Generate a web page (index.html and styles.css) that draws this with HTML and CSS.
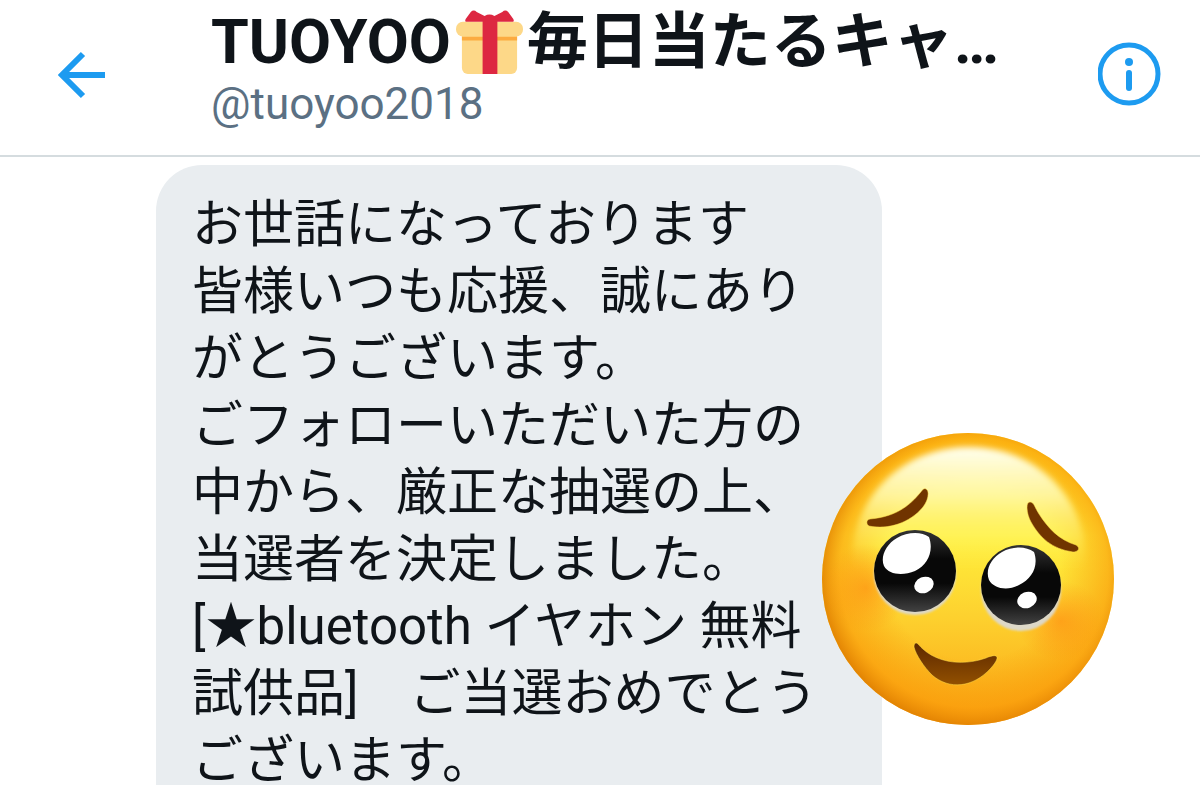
FILE: index.html
```
<!DOCTYPE html>
<html lang="ja">
<head>
<meta charset="utf-8">
<meta name="viewport" content="width=device-width, initial-scale=1">
<title>TUOYOO</title>
<link rel="stylesheet" href="styles.css">
</head>
<body>
<div class="screen">
  <header class="header">
    <button class="icon-button" type="button" aria-label="戻る">
      <svg class="icon-back" viewBox="0 0 48 48" fill="none" stroke="currentColor" stroke-width="6" aria-hidden="true">
        <path d="M47 24H5M25 3 4 24l21 21"/>
      </svg>
    </button>
    <div class="account">
      <h1 class="name"><span>TUOYOO</span><svg class="gift" viewBox="0 0 68 68" role="img" aria-label="プレゼント">
          <path fill="#fdd888" d="M6 25h56v35a6 6 0 0 1-6 6H12a6 6 0 0 1-6-6z"/>
          <path fill="#fcab40" d="M6 28h56v4H6z"/>
          <rect x="0" y="13" width="68" height="15" rx="7" fill="#fdd888"/>
          <path fill="#dd2741" d="M11 13c-2 0-2-1-1-3l5-7c2-2 4-2 6 0l8 4q5-3 10 0l8-4c2-2 4-2 6 0l5 7c1 2 1 3-1 3H42v53H27V13z"/>
        </svg><span>毎日当たるキャ…</span></h1>
      <p class="handle">@tuoyoo2018</p>
    </div>
    <button class="icon-button" type="button" aria-label="情報">
      <svg class="icon-info" viewBox="0 0 64 64" aria-hidden="true">
        <circle cx="31" cy="32" r="29" fill="none" stroke="currentColor" stroke-width="5"/>
        <circle cx="31" cy="20" r="4" fill="currentColor"/>
        <path d="M31 31v15" stroke="currentColor" stroke-width="6" stroke-linecap="round"/>
      </svg>
    </button>
  </header>
  <main class="thread">
    <div class="bubble">
      <p>お世話になっております<br>皆様いつも応援、誠にありがとうございます。</p>
      <p>ごフォローいただいた方の中から、厳正な抽選の上、当選者を決定しました。</p>
      <p>[★bluetooth イヤホン 無料試供品]　ご当選おめでとうございます。</p>
      <svg class="sticker" viewBox="0 0 320 320" role="img" aria-label="うるうる笑顔">
        <defs>
          <linearGradient id="face" x1="0" y1="0" x2="0" y2="1">
            <stop offset="0" stop-color="#ffd31c"/>
            <stop offset=".35" stop-color="#fff03c"/>
            <stop offset=".62" stop-color="#fdd22f"/>
            <stop offset="1" stop-color="#fba414"/>
          </linearGradient>
          <radialGradient id="rim" cx=".52" cy=".48" r=".54">
            <stop offset=".55" stop-color="#f79a08" stop-opacity="0"/>
            <stop offset=".85" stop-color="#fa9a08" stop-opacity=".6"/>
            <stop offset="1" stop-color="#dc7c00"/>
          </radialGradient>
          <linearGradient id="shine" x1="0" y1="0" x2="0" y2="1">
            <stop offset="0" stop-color="#fffff0"/>
            <stop offset=".3" stop-color="#fffbb0" stop-opacity=".85"/>
            <stop offset=".75" stop-color="#fff45a" stop-opacity="0"/>
          </linearGradient>
          <radialGradient id="blush">
            <stop offset="0" stop-color="#ff8a10" stop-opacity=".6"/>
            <stop offset="1" stop-color="#ff9010" stop-opacity="0"/>
          </radialGradient>
          <linearGradient id="eye" x1="0" y1="0" x2="0" y2="1">
            <stop offset="0" stop-color="#333"/>
            <stop offset=".35" stop-color="#080808"/>
            <stop offset=".65" stop-color="#080808"/>
            <stop offset="1" stop-color="#424242"/>
          </linearGradient>
          <linearGradient id="mouth" x1="0" y1="0" x2="0" y2="1">
            <stop offset="0" stop-color="#5c2800"/>
            <stop offset="1" stop-color="#925000"/>
          </linearGradient>
          <filter id="soft"><feGaussianBlur stdDeviation="1"/></filter>
          <filter id="softer"><feGaussianBlur stdDeviation="3"/></filter>
        </defs>
        <circle cx="158" cy="159" r="146" fill="url(#face)"/>
        <circle cx="158" cy="159" r="146" fill="url(#rim)"/>
        <path d="M159 27c70 0 116 54 116 108 0 40-50 54-116 54S43 175 43 135C43 81 89 27 159 27z" fill="url(#shine)" filter="url(#softer)"/>
        <ellipse cx="56" cy="168" rx="42" ry="44" fill="url(#blush)"/>
        <ellipse cx="251" cy="201" rx="44" ry="40" fill="url(#blush)"/>
        <g filter="url(#soft)">
          <ellipse cx="105" cy="154" rx="41" ry="41" fill="#ddd8c8"/>
          <ellipse cx="211" cy="170" rx="40" ry="41" fill="#ddd8c8"/>
        </g>
        <circle cx="105" cy="151" r="41" fill="url(#eye)"/>
        <circle cx="211" cy="165" r="40" fill="url(#eye)"/>
        <path fill="#fff" d="M119 117c5 14-1 28-14 34-12 5-26 4-31-5-4-9 2-22 13-28 10-6 24-7 32-1zM224 132c5 14-2 27-15 33-11 6-25 4-30-5-4-10 2-22 13-28 11-6 24-6 32 0z"/>
        <ellipse cx="114" cy="165" rx="10" ry="8" fill="#fff" transform="rotate(-22 114 165)"/>
        <ellipse cx="217" cy="180" rx="10" ry="8" fill="#fff" transform="rotate(-22 217 180)"/>
        <g fill="#703400" stroke="#ffe04c" stroke-opacity=".5">
          <path d="M116 69c4 2 2 12-3 18-13 16-35 23-54 19-3-2-3-6 1-7 21-2 36-9 50-26 3-4 4-5 6-4z"/>
          <path d="M220 82c-5 0-3 13 1 20 9 16 21 27 42 30 5 0 8-4 3-7-17-5-28-17-37-31-4-6-5-12-9-12z"/>
          <path fill="url(#mouth)" d="M108 224c15 18 42 23 68 14 9-4 17-4 5 10-18 20-42 22-59 7-8-8-16-20-18-28 0-4 2-5 4-3z"/>
        </g>
      </svg>
    </div>
  </main>
</div>
</body>
</html>
```
FILE: styles.css
```
* {
  box-sizing: border-box;
}

body {
  margin: 0;
  background: #fff;
  color: #0f1419;
  font-family: Roboto, "Noto Sans CJK JP", sans-serif;
}

.screen {
  display: flex;
  flex-direction: column;
  height: 100vh;
}

.header {
  display: flex;
  align-items: flex-start;
  flex-shrink: 0;
  padding: 4px 38px 27px 58px;
  border-bottom: 2px solid #d5dcdf;
}

.icon-button {
  display: flex;
  margin: 38px 0 0;
  padding: 0;
  border: 0;
  background: none;
  color: #1d9bf0;
}

.icon-back {
  width: 48px;
  height: 48px;
  margin-top: 9px;
}

.icon-info {
  width: 64px;
  height: 64px;
}

.account {
  flex: 1;
  min-width: 0;
  padding-left: 105px;
}

.name {
  display: flex;
  align-items: center;
  margin: 0;
  font-size: 61px;
  font-weight: 700;
  line-height: 76px;
  white-space: nowrap;
}

.gift {
  width: 67px;
  height: 67px;
  margin: 0 4px 0 5px;
}

.handle {
  margin: 0;
  color: #5b7083;
  font-size: 44px;
  line-height: 48px;
}

.thread {
  display: flex;
  flex: 1;
  min-height: 0;
  padding: 8px 80px 0 156px;
  overflow-y: auto;
  scrollbar-width: none;
}

.bubble {
  position: relative;
  flex: 0 1 726px;
  height: max-content;
  padding: 26px 37px 0 36px;
  border-radius: 46px 46px 0 0;
  background: #e9edf0;
  font-size: 51px;
  line-height: 67px;
}

.bubble p {
  margin: 0;
}

.sticker {
  position: absolute;
  top: 255px;
  right: -248px;
  width: 320px;
  height: 320px;
}
```
